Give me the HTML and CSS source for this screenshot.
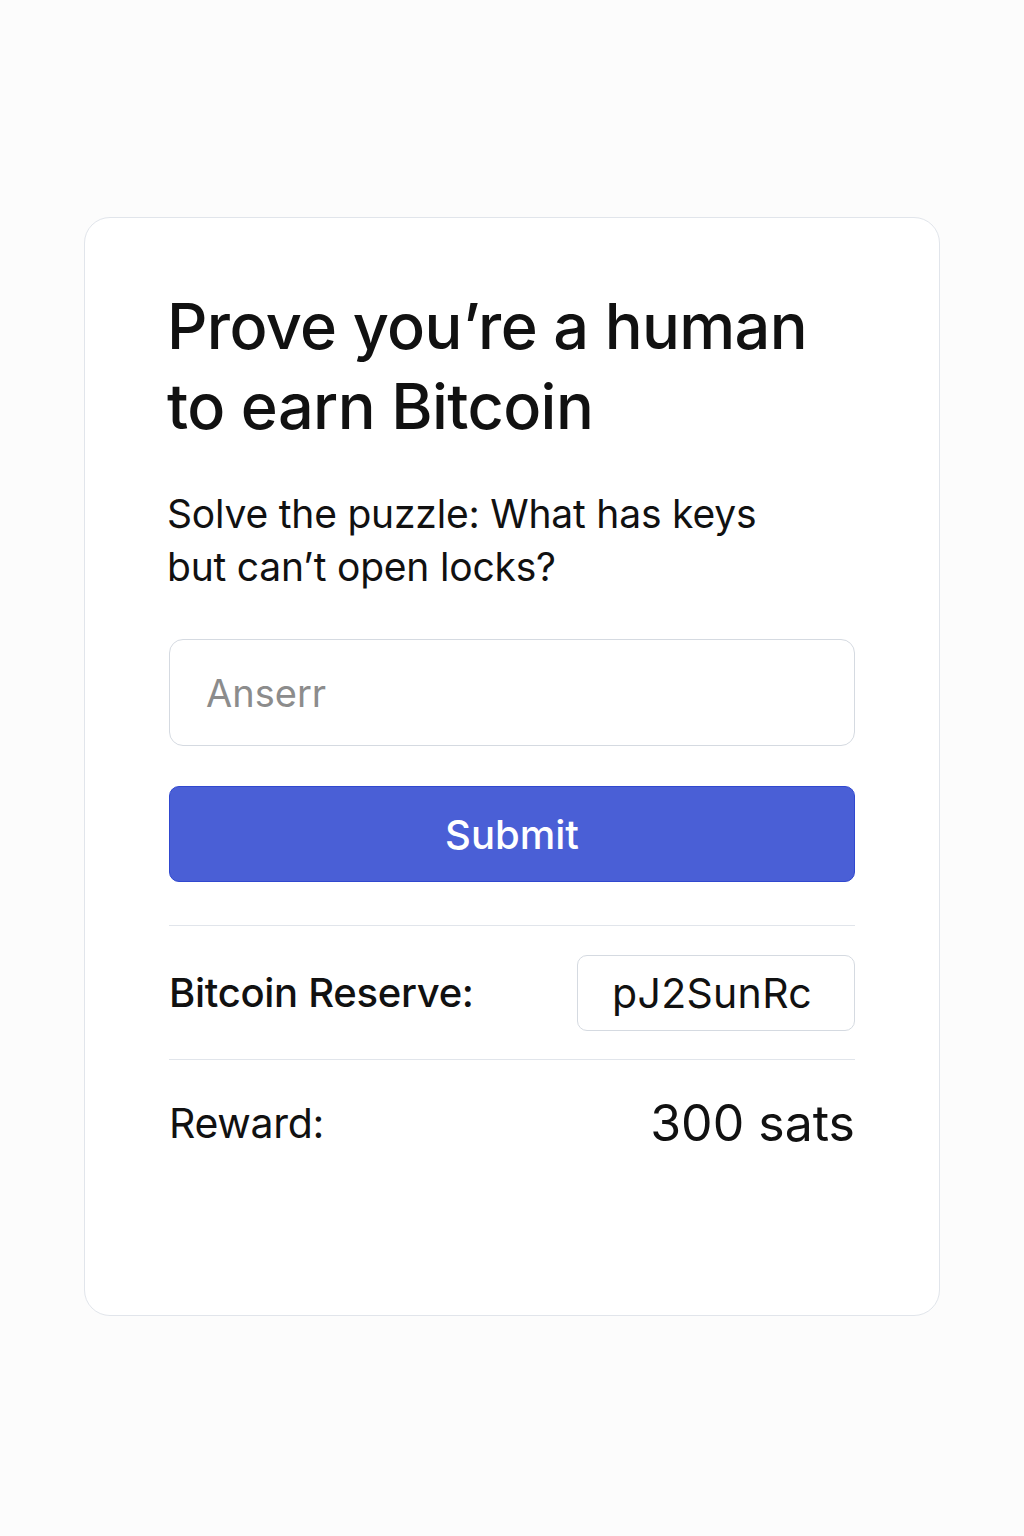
FILE: index.html
```html
<!DOCTYPE html>
<html lang="en">
<head>
    <meta charset="UTF-8">
    <meta name="viewport" content="width=device-width, initial-scale=1.0">
    <title>Prove you're a human</title>
    <link rel="stylesheet" href="styles.css">
</head>
<body>
    <div class="card">
        <h1 class="title">Prove you’re a human to earn Bitcoin</h1>
        <p class="puzzle">Solve the puzzle: What has keys but can’t open locks?</p>

        <input type="text" class="answer" placeholder="Anserr">
        <button class="submit">Submit</button>

        <div class="row reserve">
            <span class="label">Bitcoin Reserve:</span>
            <span class="code">pJ2SunRc</span>
        </div>
        <div class="row reward">
            <span class="label light">Reward:</span>
            <span class="amount">300 sats</span>
        </div>
    </div>
</body>
</html>
```

FILE: styles.css
```css
body {
    font-family: Inter, "Noto Sans", sans-serif;
    background-color: #fcfcfc;
    margin: 0;
    padding-top: 217px;
    color: #111;
}

.card {
    box-sizing: border-box;
    width: 856px;
    height: 1099px;
    margin-left: 84px;
    padding: 68px 84px 0 82px;
    background-color: #fff;
    border: 1px solid #e1e5eb;
    border-radius: 26px;
}

.title {
    font-size: 63px;
    font-weight: 500;
    line-height: 80px;
    letter-spacing: -0.6px;
    margin: 0 0 41px;
    max-width: 680px;
}

.puzzle {
    font-size: 39px;
    font-weight: 400;
    line-height: 53px;
    letter-spacing: -0.2px;
    margin: 0 0 46px;
    max-width: 620px;
}

.answer {
    display: block;
    box-sizing: border-box;
    width: calc(100% - 2px);
    height: 107px;
    margin-left: 2px;
    padding: 0 36px;
    font-family: inherit;
    font-size: 38px;
    border: 1px solid #d5dae1;
    border-radius: 14px;
    outline: none;
}

.answer::placeholder {
    color: #8c8c8c;
}

.submit {
    display: block;
    width: calc(100% - 2px);
    height: 96px;
    margin: 40px 0 0 2px;
    font-family: inherit;
    font-size: 40px;
    font-weight: 500;
    color: #fff;
    background-color: #4a5fd6;
    border: 1px solid #3048cf;
    border-radius: 10px;
}

.row {
    display: flex;
    align-items: center;
    justify-content: space-between;
    margin-left: 2px;
    border-top: 1px solid #e1e5eb;
}

.reserve {
    margin-top: 43px;
    height: 133px;
}

.reward {
    height: 126px;
}

.label {
    font-size: 40px;
    font-weight: 500;
    letter-spacing: -0.3px;
}

.label.light {
    font-weight: 400;
    font-size: 41px;
}

.code {
    box-sizing: border-box;
    width: 278px;
    height: 76px;
    display: flex;
    align-items: center;
    justify-content: center;
    padding-right: 8px;
    font-size: 41px;
    letter-spacing: 0.3px;
    border: 1px solid #d5dae1;
    border-radius: 10px;
}

.amount {
    font-size: 50px;
}
```
